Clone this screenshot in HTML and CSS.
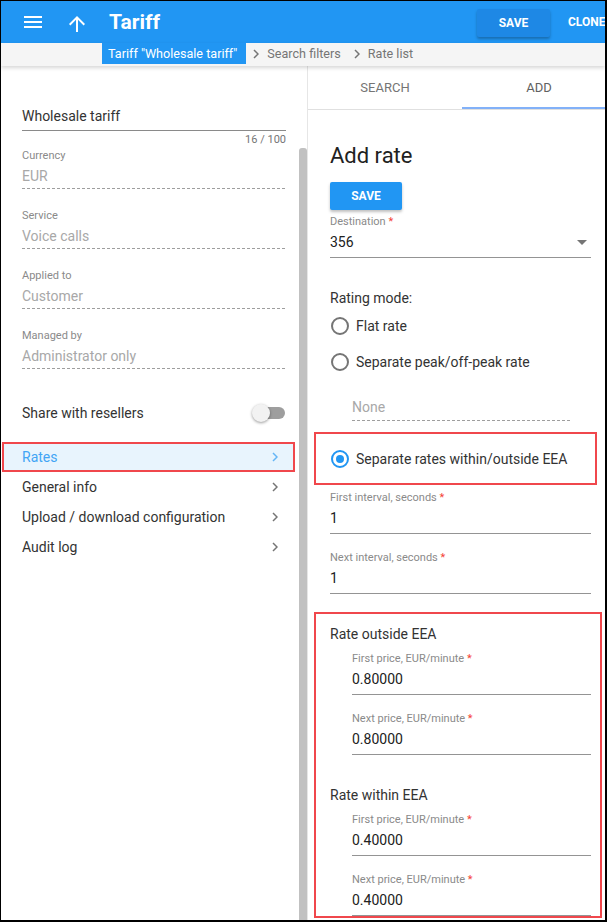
FILE: index.html
```html
<!DOCTYPE html>
<html lang="en">
<head>
<meta charset="utf-8">
<title>Tariff</title>
<link rel="stylesheet" href="styles.css">
</head>
<body>
<div class="frame">
  <header class="appbar">
    <svg class="icon" viewBox="0 0 24 24"><path d="M3 18h18v-2H3v2zm0-5h18v-2H3v2zm0-7v2h18V6H3z" fill="#fff"/></svg>
    <svg class="icon icon-up" viewBox="0 0 24 24"><path d="M4 12l1.41 1.41L11 7.83V20h2V7.83l5.58 5.59L20 12l-8-8-8 8z" fill="#fff"/></svg>
    <h1 class="title">Tariff</h1>
    <div class="actions">
      <button class="btn-bar">SAVE</button>
      <button class="btn-flat">CLONE</button>
    </div>
  </header>
  <nav class="crumbs">
    <span class="crumb-active">Tariff "Wholesale tariff"</span>
    <span class="crumb"><svg class="chev" viewBox="0 0 6 10"><path d="M1 1l4 4-4 4" fill="none" stroke="#757575" stroke-width="1.5"/></svg>Search filters</span>
    <span class="crumb"><svg class="chev" viewBox="0 0 6 10"><path d="M1 1l4 4-4 4" fill="none" stroke="#757575" stroke-width="1.5"/></svg>Rate list</span>
  </nav>
  <div class="main">
    <aside class="left">
      <div class="name-input">Wholesale tariff</div>
      <div class="counter">16 / 100</div>
      <div class="ro-list">
        <div class="ro-field"><div class="ro-label">Currency</div><div class="ro-value">EUR</div></div>
        <div class="ro-field"><div class="ro-label">Service</div><div class="ro-value">Voice calls</div></div>
        <div class="ro-field"><div class="ro-label">Applied to</div><div class="ro-value">Customer</div></div>
        <div class="ro-field"><div class="ro-label">Managed by</div><div class="ro-value">Administrator only</div></div>
      </div>
      <div class="share-row">
        <span>Share with resellers</span>
        <span class="switch"><span class="switch-track"></span><span class="switch-thumb"></span></span>
      </div>
      <div class="menu">
        <div class="menu-item active"><span>Rates</span><svg class="mchev" viewBox="0 0 6 10"><path d="M1 1l4 4-4 4" fill="none" stroke="#64b5f6" stroke-width="1.5"/></svg></div>
        <div class="menu-item"><span>General info</span><svg class="mchev" viewBox="0 0 6 10"><path d="M1 1l4 4-4 4" fill="none" stroke="#757575" stroke-width="1.5"/></svg></div>
        <div class="menu-item"><span>Upload / download configuration</span><svg class="mchev" viewBox="0 0 6 10"><path d="M1 1l4 4-4 4" fill="none" stroke="#757575" stroke-width="1.5"/></svg></div>
        <div class="menu-item"><span>Audit log</span><svg class="mchev" viewBox="0 0 6 10"><path d="M1 1l4 4-4 4" fill="none" stroke="#757575" stroke-width="1.5"/></svg></div>
      </div>
    </aside>
    <div class="scrollbar"><div class="scroll-thumb"></div></div>
    <section class="right">
      <div class="tabs">
        <div class="tab">SEARCH</div>
        <div class="tab active">ADD</div>
      </div>
      <div class="content">
        <h2 class="heading">Add rate</h2>
        <button class="btn-save">SAVE</button>
        <div class="field f-dest">
          <div class="f-label">Destination <span class="req">*</span></div>
          <div class="f-value"><span>356</span><span class="caret"></span></div>
        </div>
        <div class="mode-label">Rating mode:</div>
        <div class="radio-row"><span class="radio"></span><span>Flat rate</span></div>
        <div class="radio-row"><span class="radio"></span><span>Separate peak/off-peak rate</span></div>
        <div class="none-field">None</div>
        <div class="mark-box box-radio">
          <div class="radio-row in-box"><span class="radio checked"></span><span>Separate rates within/outside EEA</span></div>
        </div>
        <div class="field f-first">
          <div class="f-label">First interval, seconds <span class="req">*</span></div>
          <div class="f-value">1</div>
        </div>
        <div class="field f-next">
          <div class="f-label">Next interval, seconds <span class="req">*</span></div>
          <div class="f-value">1</div>
        </div>
        <div class="mark-box box-rates">
          <div class="sub-title">Rate outside EEA</div>
          <div class="field price p-first">
            <div class="f-label">First price, EUR/minute <span class="req">*</span></div>
            <div class="f-value">0.80000</div>
          </div>
          <div class="field price p-next">
            <div class="f-label">Next price, EUR/minute <span class="req">*</span></div>
            <div class="f-value">0.80000</div>
          </div>
          <div class="sub-title second">Rate within EEA</div>
          <div class="field price p-first">
            <div class="f-label">First price, EUR/minute <span class="req">*</span></div>
            <div class="f-value">0.40000</div>
          </div>
          <div class="field price p-next">
            <div class="f-label">Next price, EUR/minute <span class="req">*</span></div>
            <div class="f-value">0.40000</div>
          </div>
        </div>
      </div>
    </section>
  </div>
</div>
</body>
</html>
```
FILE: styles.css
```css
* { box-sizing: border-box; }
html, body { margin: 0; padding: 0; background: #fff; }
body { font-family: Roboto, "Noto Sans", "Liberation Sans", sans-serif; font-size: 14px; color: #212121; }

.frame {
  width: 607px; height: 922px;
  border-style: solid; border-color: #000; border-width: 1px 2px 2px 1px;
  overflow: hidden;
  display: flex; flex-direction: column;
}

/* App bar */
.appbar {
  height: 42px; flex-shrink: 0;
  background: #2196f3; color: #fff;
  display: flex; align-items: center; gap: 20px;
  padding-left: 20px;
}
.icon { width: 24px; height: 24px; flex-shrink: 0; display: block; }
.icon-up { margin-top: 3px; }
.title { flex: 1; min-width: 0; margin: 0; font-size: 21px; font-weight: 700; line-height: 24px; }
.actions { width: 147px; flex-shrink: 0; margin-right: -19px; display: flex; align-items: center; }
.btn-bar {
  width: 73px; height: 28px; flex-shrink: 0;
  border: 0; border-radius: 2px; background: #1e88e5; color: #fff;
  font-family: inherit; font-size: 12px; font-weight: 700;
  box-shadow: 0 2px 3px rgba(0,0,0,.28);
  margin-top: 2px;
}
.btn-flat {
  border: 0; padding: 0; margin-left: 18px; background: none; color: #fff; flex-shrink: 0;
  font-family: inherit; font-size: 12px; font-weight: 700; white-space: nowrap;
}

/* Breadcrumbs */
.crumbs {
  height: 23px; flex-shrink: 0; background: #f5f5f5;
  display: flex; align-items: flex-start;
  padding-left: 101px;
  font-size: 12.6px; color: #757575;
  position: relative; z-index: 2;
  box-shadow: 0 2px 4px rgba(0,0,0,.16);
}
.crumb-active { height: 21px; line-height: 21px; background: #2196f3; color: #fff; padding: 0 9px 0 6px; white-space: nowrap; }
.crumb { height: 21px; display: flex; align-items: center; gap: 8px; padding: 0 6px 0 7px; white-space: nowrap; }
.chev { width: 6px; height: 10px; display: block; }

/* Main */
.main { flex: 1; min-height: 0; display: flex; }
.left { width: 298px; flex-shrink: 0; padding: 40px 13px 0 21px; }
.scrollbar { width: 8px; flex-shrink: 0; }
.scroll-thumb { margin-top: 82px; height: 100%; background: #c1c1c1; border-radius: 3px 3px 0 0; }
.right { flex: 1; min-width: 0; border-left: 1px solid #e6e6e6; overflow: hidden; }

/* Left panel */
.name-input { font-size: 14px; line-height: 20px; color: #333; padding-bottom: 4px; border-bottom: 1px solid #8a8a8a; }
.counter { margin-top: 2px; text-align: right; font-size: 11px; line-height: 14px; color: #757575; }
.ro-list { margin-top: 2px; display: flex; flex-direction: column; gap: 19px; }
.ro-label { font-size: 11px; line-height: 14px; color: #8a8a8a; margin-bottom: 3px; }
.ro-value {
  font-size: 14px; line-height: 20px; color: #a8a8a8; padding-bottom: 3px;
  border-bottom: 1px solid transparent;
  background: linear-gradient(to right, #9e9e9e 60%, transparent 60%) left bottom / 5px 1px repeat-x;
}
.share-row { margin-top: 28px; height: 30px; display: flex; align-items: center; justify-content: space-between; color: #333; }
.switch { position: relative; width: 33px; height: 18px; margin-right: 1px; }
.switch-track { position: absolute; left: 3px; top: 3px; width: 30px; height: 12px; border-radius: 6px; background: #9e9e9e; }
.switch-thumb { position: absolute; left: 0; top: 0; width: 18px; height: 18px; border-radius: 50%; background: #f2f2f2; box-shadow: 0 1px 3px rgba(0,0,0,.4); }

.menu { margin: 14px -13px 0 -21px; }
.menu-item { height: 30px; display: flex; align-items: center; justify-content: space-between; padding: 0 21px 0 21px; color: #333; }
.menu-item.active { margin: 0 4px 0 1px; padding: 0 15px 0 18px; border: 2px solid #f0474c; background: #e8f4fd; color: #42a5f5; }
.mchev { width: 6px; height: 10px; display: block; }

/* Right panel */
.tabs { display: flex; height: 44px; border-bottom: 1px solid #e0e0e0; }
.tab { width: 154px; flex-shrink: 0; display: flex; align-items: center; justify-content: center; font-size: 13px; color: #757575; }
.tab.active { color: #616161; box-shadow: inset 0 -2px 0 #82b1f8; }

.content { padding: 0 14px 0 22px; }
.heading { margin: 32px 0 0; font-size: 22px; line-height: 28px; font-weight: 400; color: #212121; }
.btn-save {
  display: block; margin-top: 12px; width: 72px; height: 28px;
  border: 0; border-radius: 2px; background: #2196f3; color: #fff;
  font-family: inherit; font-size: 12px; font-weight: 700;
  box-shadow: 0 2px 3px rgba(0,0,0,.25);
}
.f-label { font-size: 11px; line-height: 14px; color: #8a8a8a; margin-bottom: 3px; }
.req { color: #f44336; }
.f-value {
  font-size: 14px; line-height: 20px; color: #212121;
  padding-bottom: 5px; border-bottom: 1px solid #949494;
  display: flex; align-items: center; justify-content: space-between;
}
.caret { width: 0; height: 0; border-left: 5px solid transparent; border-right: 5px solid transparent; border-top: 5px solid #757575; margin-right: 4px; }
.f-dest { margin-top: 5px; }
.mode-label { margin-top: 30px; line-height: 20px; color: #333; }
.radio-row { height: 36px; display: flex; align-items: center; gap: 7px; color: #333; }
.radio { width: 18px; height: 18px; margin-left: 1px; border: 2px solid #757575; border-radius: 50%; flex-shrink: 0; display: flex; align-items: center; justify-content: center; }
.radio.checked { border-color: #2196f3; }
.radio.checked::after { content: ""; width: 8px; height: 8px; border-radius: 50%; background: #2196f3; }
.none-field {
  margin: 17px 19px 0 22px; line-height: 20px; color: #a8a8a8; padding-bottom: 4px;
  border-bottom: 1px solid transparent;
  background: linear-gradient(to right, #9e9e9e 60%, transparent 60%) left bottom / 5px 1px repeat-x;
}
.mark-box { border: 2px solid #f0474c; margin-left: -16px; padding-left: 14px; }
.box-radio { margin-top: 10px; margin-right: -6px; padding-right: 4px; }
.radio-row.in-box { height: 49px; }
.f-first { margin-top: 6px; }
.f-next { margin-top: 17px; }
.box-rates { margin-top: 18px; margin-right: -11px; padding-right: 9px; }
.sub-title { margin-top: 10px; line-height: 20px; color: #333; }
.sub-title.second { margin-top: 30px; }
.price { margin-left: 22px; }
.p-first { margin-top: 8px; }
.p-next { margin-top: 17px; }
```
